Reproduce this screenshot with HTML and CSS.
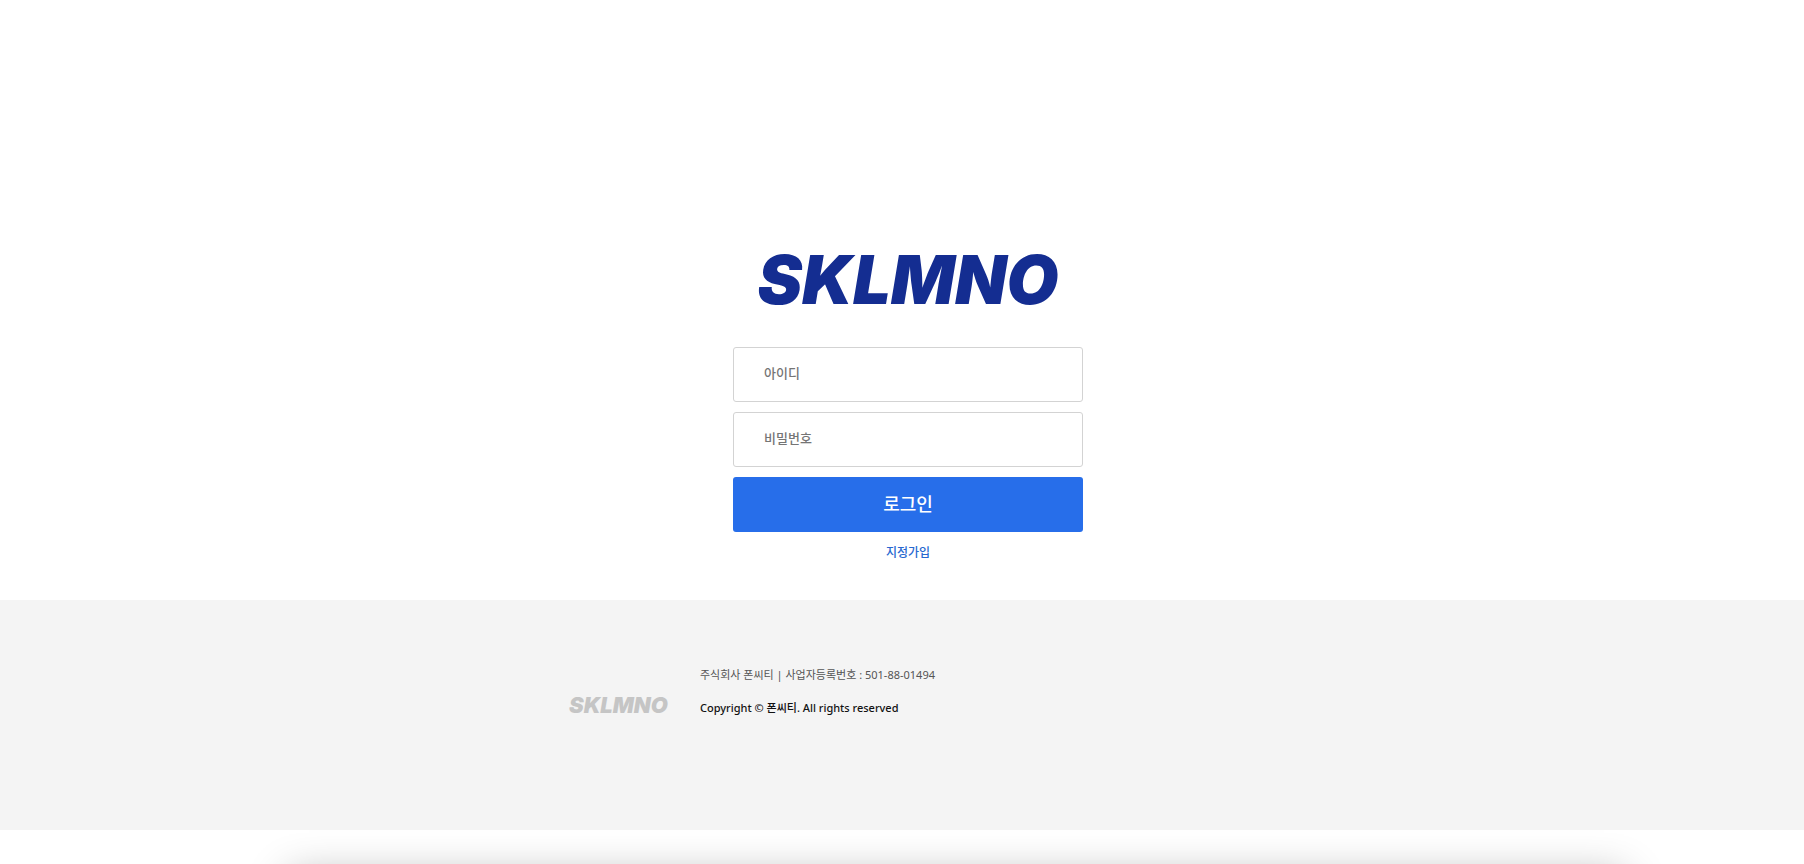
FILE: index.html
```html
<!DOCTYPE html>
<html lang="ko">
<head>
<meta charset="utf-8">
<title>SKLMNO 로그인</title>
<link rel="stylesheet" href="styles.css">
</head>
<body>
<main class="login">
  <form class="login-form">
    <h1 class="logo">SKLMNO</h1>
    <input class="field" type="text" placeholder="아이디" aria-label="아이디">
    <input class="field" type="password" placeholder="비밀번호" aria-label="비밀번호">
    <button class="submit" type="button">로그인</button>
    <a class="join" href="#">지정가입</a>
  </form>
</main>
<footer class="footer">
  <div class="footer-inner">
    <div class="footer-logo">SKLMNO</div>
    <div class="footer-text">
      <p class="company">주식회사 폰씨티 | 사업자등록번호 : 501-88-01494</p>
      <p class="copyright">Copyright © 폰씨티. All rights reserved</p>
    </div>
  </div>
</footer>
<div class="below"><div class="panel"></div></div>
</body>
</html>
```
FILE: styles.css
```css
* { box-sizing: border-box; }
html, body { height: 100%; }
body {
  margin: 0;
  display: flex;
  flex-direction: column;
  overflow: hidden;
  background: #fff;
  color: #111;
  font-family: "Noto Sans", "Noto Sans CJK KR", sans-serif;
}
.login {
  flex: none;
  padding: 240px 0 38px 12px;
}
.login-form {
  display: flex;
  flex-direction: column;
  gap: 10px;
  width: 350px;
  margin: 0 auto;
}
.logo {
  margin: 0 0 17px;
  color: #142d91;
  font: italic 900 67px/80px Inter, sans-serif;
  text-align: center;
  white-space: nowrap;
}
.field {
  width: 100%;
  height: 55px;
  padding: 0 30px 4px;
  border: 1px solid #d3d3d3;
  border-radius: 3px;
  background: #fff;
  font: 500 13px "Noto Sans CJK KR", sans-serif;
}
.field::placeholder { color: #757575; opacity: 1; }
.submit {
  height: 55px;
  padding: 0 0 4px;
  border: 0;
  border-radius: 3px;
  background: #276eea;
  color: #fff;
  font: 500 18px "Noto Sans CJK KR", sans-serif;
}
.join {
  align-self: center;
  color: #2768d0;
  font: 500 12px/20px "Noto Sans CJK KR", sans-serif;
  text-decoration: none;
}
.footer {
  flex: none;
  min-height: 230px;
  padding: 64px 24px 0;
  background: #f4f4f4;
}
.footer-inner {
  display: flex;
  align-items: flex-end;
  gap: 30px;
  width: 666px;
  max-width: 100%;
  margin: 0 auto;
}
.footer-logo {
  flex: none;
  width: 101px;
  color: #c5c5c5;
  font: italic 900 22px/28px Inter, sans-serif;
}
.footer-text { font-size: 11px; line-height: 22px; }
.footer-text p { margin: 0; }
.company { color: #555; }
.footer-text .copyright { margin-top: 11px; font-weight: 500; }
.below {
  flex: 1;
  overflow: hidden;
  padding: 46px 10% 0 16%;
}
.panel {
  height: 200px;
  background: #fff;
  box-shadow: 0 0 40px rgba(0, 0, 0, 0.3);
}
```
